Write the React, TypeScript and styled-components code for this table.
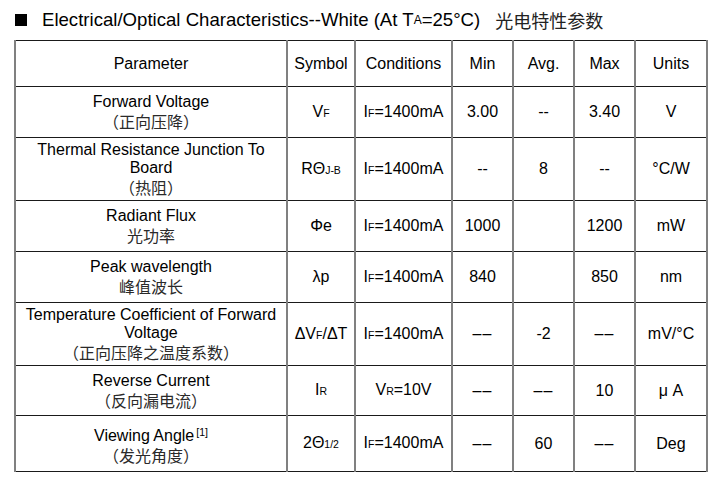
import * as React from 'react';
import styled, { createGlobalStyle } from 'styled-components';

const GlobalStyle = createGlobalStyle`
  html, body {
    margin: 0;
    padding: 0;
    background: #ffffff;
  }
  body {
    font-family: "Liberation Sans", Arial, "Noto Sans CJK SC", sans-serif;
    color: #000;
  }
`;

const Page = styled.div`
  width: 726px;
  height: 488px;
  padding: 9px 0 0 14px;
  box-sizing: border-box;
`;

const Title = styled.div`
  display: flex;
  align-items: center;
  height: 22px;
  font-size: 18.6px;
  margin-bottom: 9px;
  white-space: nowrap;
`;

const Bullet = styled.span`
  display: inline-block;
  width: 12px;
  height: 12px;
  background: #000;
  margin: 0 15px 0 1px;
`;

const TitleCn = styled.span`
  font-family: "Noto Sans CJK SC", sans-serif;
  font-size: 18px;
  margin-left: 15px;
  color: #222;
`;

const Small = styled.span`
  font-size: 12px;
`;

const Table = styled.table`
  border-collapse: collapse;
  table-layout: fixed;
  width: 692px;
  font-size: 16px;
  text-align: center;
`;

const Row = styled.tr<{ $h: number }>`
  height: ${p => p.$h}px;
`;

const Cell = styled.td`
  border-left: 2px solid #808080;
  border-right: 2px solid #808080;
  border-top: 1.5px solid #1a1a1a;
  border-bottom: 1.5px solid #1a1a1a;
  padding: 0 2px;
  vertical-align: middle;
  line-height: 18px;
`;

const HeadCell = styled(Cell).attrs({ as: 'th' })`
  font-weight: normal;
`;

const Cn = styled.div`
  font-family: "Noto Sans CJK SC", sans-serif;
  font-size: 16px;
  color: #2a2a2a;
  line-height: 20px;
`;

const Sub = styled.span`
  font-size: 10.5px;
`;

const Sup = styled.sup`
  font-size: 10.5px;
  vertical-align: 5px;
  margin-left: 2px;
`;

const LongDash = styled.span`
  letter-spacing: 1px;
`;

const IF = () => <>I<Sub>F</Sub>=1400mA</>;
const Dd = () => <LongDash>––</LongDash>;

type RowData = {
  h: number;
  param: React.ReactNode;
  symbol: React.ReactNode;
  cond: React.ReactNode;
  min: React.ReactNode;
  avg: React.ReactNode;
  max: React.ReactNode;
  unit: React.ReactNode;
};

const rows: RowData[] = [
  {
    h: 51,
    param: <><div>Forward Voltage</div><Cn>（正向压降）</Cn></>,
    symbol: <>V<Sub>F</Sub></>,
    cond: <IF />,
    min: '3.00',
    avg: '--',
    max: '3.40',
    unit: 'V',
  },
  {
    h: 63,
    param: <><div>Thermal Resistance Junction To</div><div>Board</div><Cn>（热阻）</Cn></>,
    symbol: <>RΘ<Sub>J-B</Sub></>,
    cond: <IF />,
    min: '--',
    avg: '8',
    max: '--',
    unit: '°C/W',
  },
  {
    h: 51,
    param: <><div>Radiant Flux</div><Cn>光功率</Cn></>,
    symbol: 'Φe',
    cond: <IF />,
    min: '1000',
    avg: '',
    max: '1200',
    unit: 'mW',
  },
  {
    h: 51,
    param: <><div>Peak wavelength</div><Cn>峰值波长</Cn></>,
    symbol: 'λp',
    cond: <IF />,
    min: '840',
    avg: '',
    max: '850',
    unit: 'nm',
  },
  {
    h: 63,
    param: <><div>Temperature Coefficient of Forward</div><div>Voltage</div><Cn>（正向压降之温度系数）</Cn></>,
    symbol: <>ΔV<Sub>F</Sub>/ΔT</>,
    cond: <IF />,
    min: <Dd />,
    avg: '-2',
    max: <Dd />,
    unit: 'mV/°C',
  },
  {
    h: 50,
    param: <><div>Reverse Current</div><Cn>（反向漏电流）</Cn></>,
    symbol: <>I<Sub>R</Sub></>,
    cond: <>V<Sub>R</Sub>=10V</>,
    min: <Dd />,
    avg: <Dd />,
    max: '10',
    unit: 'μ A',
  },
  {
    h: 56,
    param: <><div>Viewing Angle<Sup>[1]</Sup></div><Cn>（发光角度）</Cn></>,
    symbol: <>2Θ<Sub>1/2</Sub></>,
    cond: <IF />,
    min: <Dd />,
    avg: '60',
    max: <Dd />,
    unit: 'Deg',
  },
];

export default function App() {
  return (
    <Page>
      <GlobalStyle />
      <Title>
        <Bullet />
        Electrical/Optical Characteristics--White (At T<Small>A</Small>=25°C)
        <TitleCn>光电特性参数</TitleCn>
      </Title>
      <Table>
        <colgroup>
          <col style={{ width: 272 }} />
          <col style={{ width: 68 }} />
          <col style={{ width: 97 }} />
          <col style={{ width: 61 }} />
          <col style={{ width: 61 }} />
          <col style={{ width: 61 }} />
          <col style={{ width: 72 }} />
        </colgroup>
        <thead>
          <Row $h={46}>
            <HeadCell>Parameter</HeadCell>
            <HeadCell>Symbol</HeadCell>
            <HeadCell>Conditions</HeadCell>
            <HeadCell>Min</HeadCell>
            <HeadCell>Avg.</HeadCell>
            <HeadCell>Max</HeadCell>
            <HeadCell>Units</HeadCell>
          </Row>
        </thead>
        <tbody>
          {rows.map((r, i) => (
            <Row key={i} $h={r.h}>
              <Cell>{r.param}</Cell>
              <Cell>{r.symbol}</Cell>
              <Cell>{r.cond}</Cell>
              <Cell>{r.min}</Cell>
              <Cell>{r.avg}</Cell>
              <Cell>{r.max}</Cell>
              <Cell>{r.unit}</Cell>
            </Row>
          ))}
        </tbody>
      </Table>
    </Page>
  );
}
